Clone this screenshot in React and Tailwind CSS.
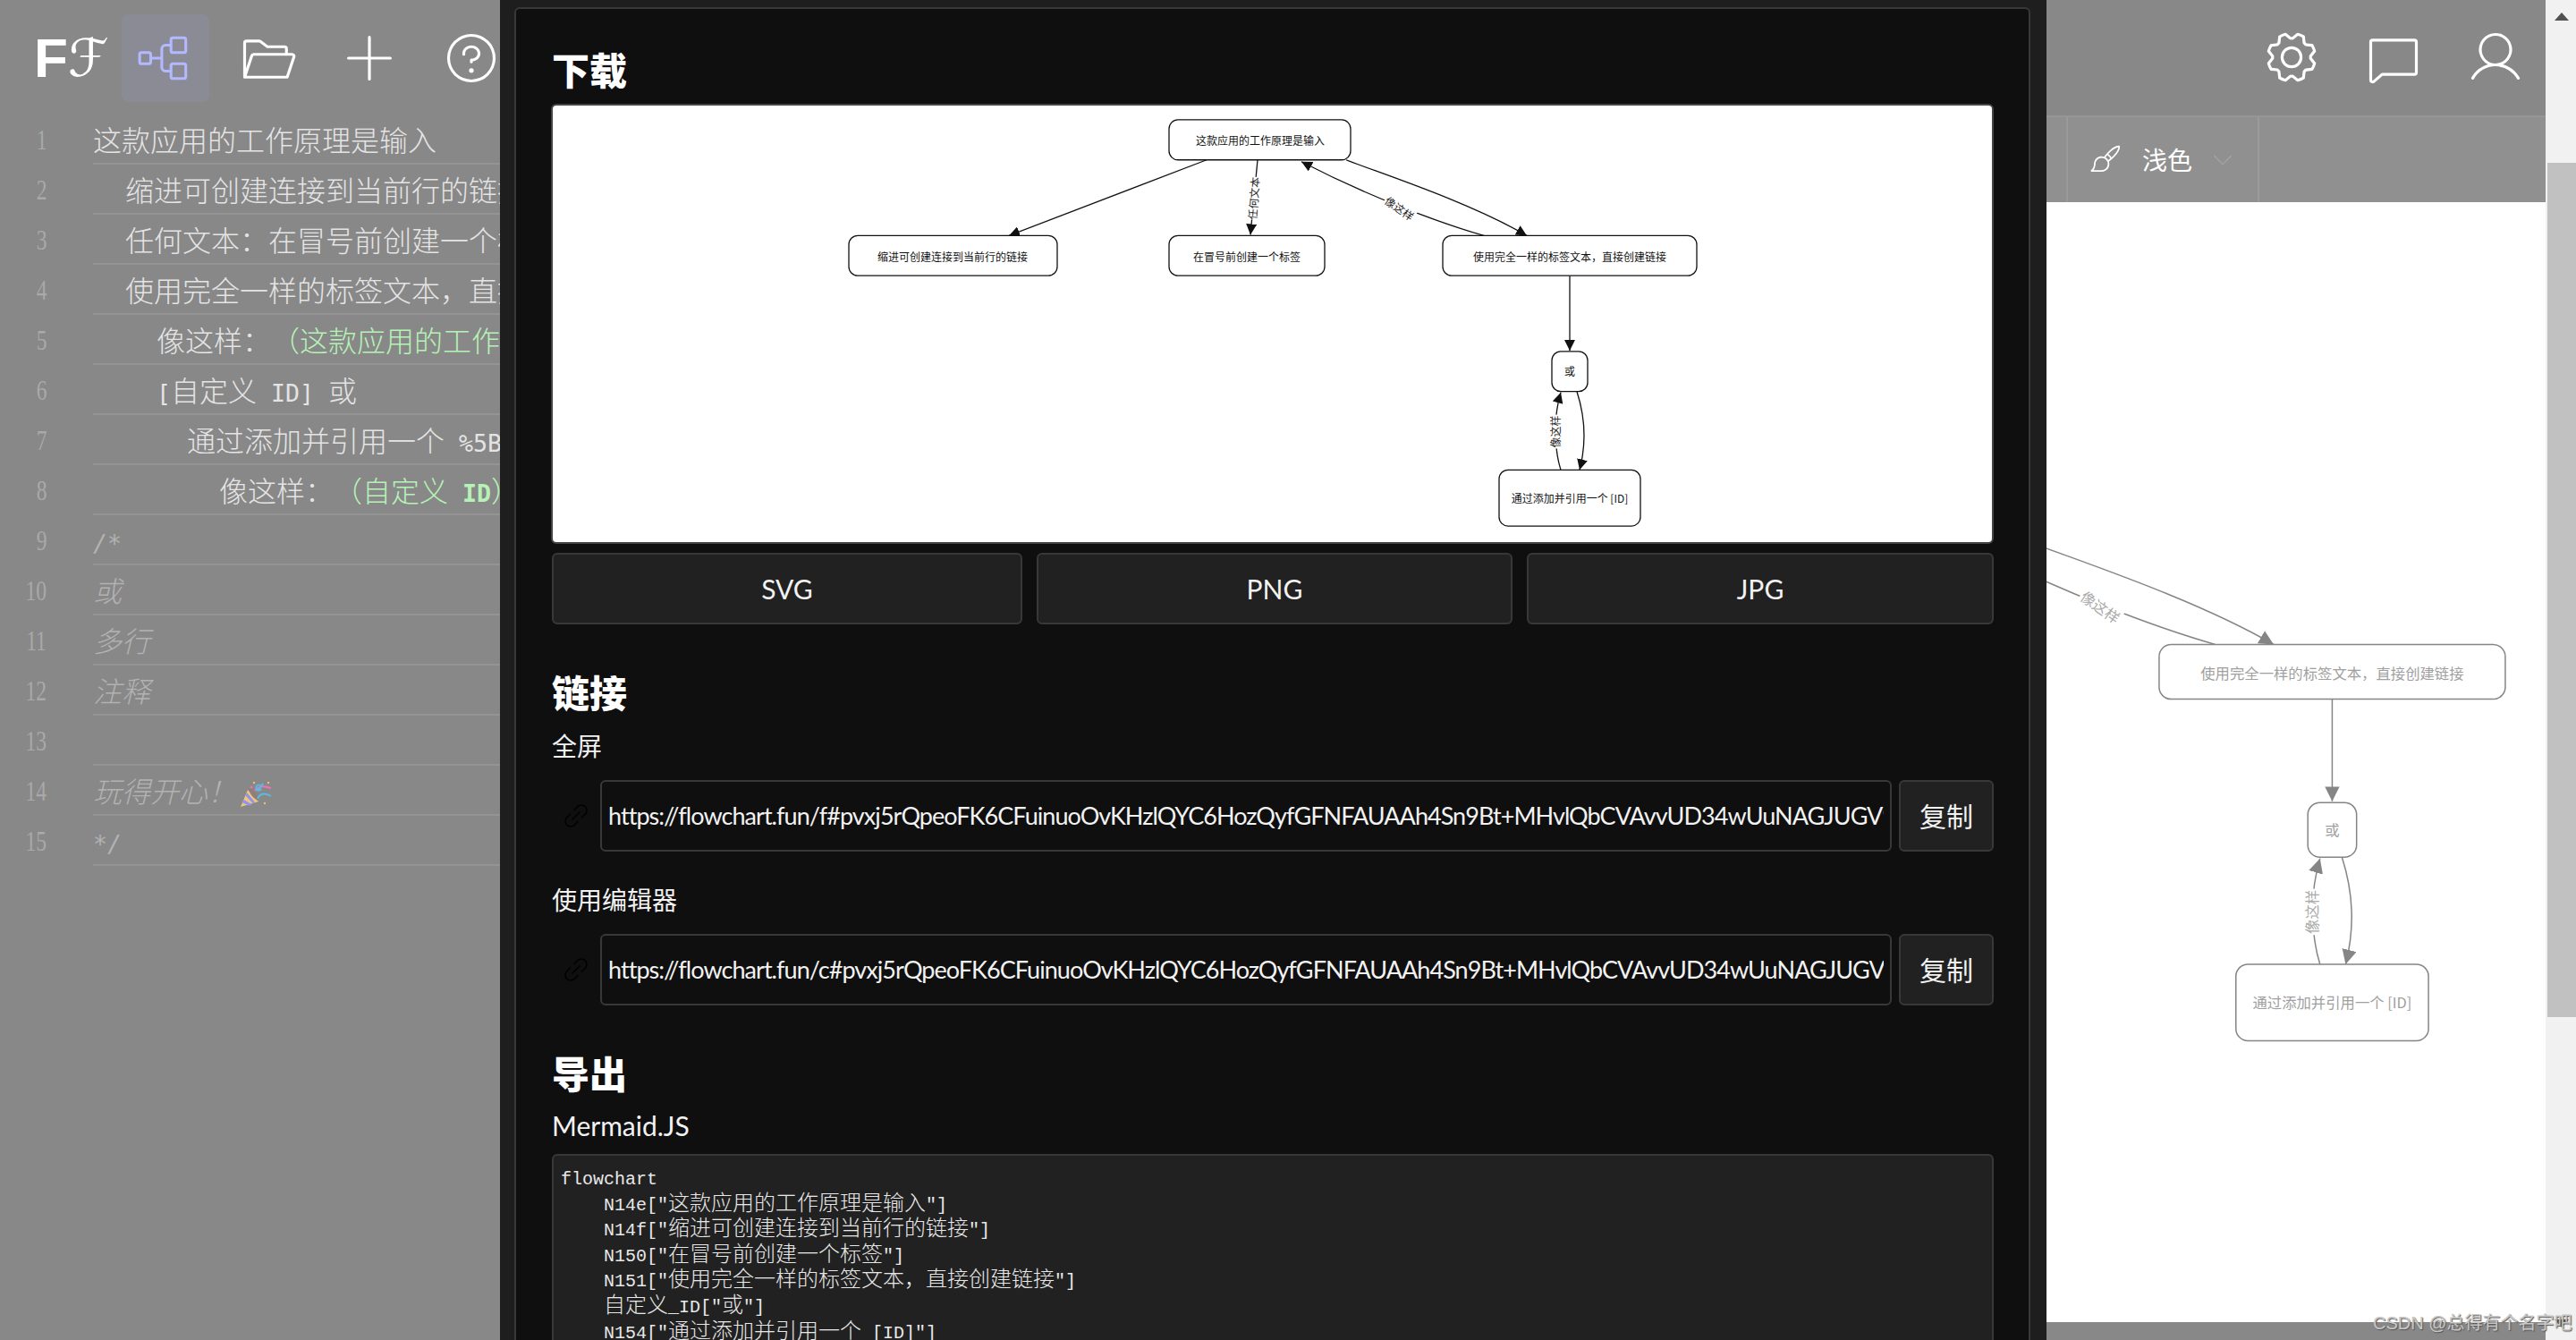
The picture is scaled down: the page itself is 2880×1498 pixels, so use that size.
import React from 'react';
import {
  PiTreeStructureLight,
  PiFolderOpenLight,
  PiPlusLight,
  PiQuestionLight,
  PiGearLight,
  PiChatLight,
  PiUserLight,
  PiPaintBrushLight,
  PiCaretDownLight,
  PiLinkSimpleLight,
} from 'react-icons/pi';

const hash = 'pvxj5rQpeoFK6CFuinuoOvKHzlQYC6HozQyfGFNFAUAAh4Sn9Bt+MHvlQbCVAvvUD34wUuNAGJUGV9wBpQkA';

const editorLines = [
  { pad: '', text: '这款应用的工作原理是输入' },
  { pad: 'pl-9', text: '缩进可创建连接到当前行的链接' },
  { pad: 'pl-9', text: '任何文本：在冒号前创建一个标签' },
  { pad: 'pl-9', text: '使用完全一样的标签文本，直接创建链接' },
  { pad: 'pl-[71px]', text: '像这样：', green: '（这款应用的工作原理是输入）' },
  { pad: 'pl-[71px]', text: '[自定义 ID] 或' },
  { pad: 'pl-[105px]', text: '通过添加并引用一个 %5BID%5D' },
  { pad: 'pl-[141px]', text: '像这样：', green: '（自定义 ID）' },
  { pad: '', text: '/*', comment: true },
  { pad: '', text: '或', comment: true },
  { pad: '', text: '多行', comment: true },
  { pad: '', text: '注释', comment: true },
  { pad: '', text: '', comment: true },
  { pad: '', text: '玩得开心！', comment: true, popper: true },
  { pad: '', text: '*/', comment: true },
];

const codeLines = [
  'flowchart',
  '    N14e["这款应用的工作原理是输入"]',
  '    N14f["缩进可创建连接到当前行的链接"]',
  '    N150["在冒号前创建一个标签"]',
  '    N151["使用完全一样的标签文本，直接创建链接"]',
  '    自定义_ID["或"]',
  '    N154["通过添加并引用一个 [ID]"]',
];

// ascii runs get a smaller mono size so they sit at half the width of a CJK glyph
const Mixed = ({ text, latin }) =>
  text.split(/([\x20-\x7e]+)/).map((part, i) =>
    /^[\x20-\x7e]+$/.test(part) ? (
      <span key={i} className={latin}>{part}</span>
    ) : (
      <span key={i}>{part}</span>
    )
  );

const Popper = () => (
  <svg width="36" height="32" viewBox="0 0 36 32" className="ml-1 inline-block align-middle">
    <path d="M1 30 L9 11 L21 24 Z" fill="#f3c47c" />
    <path d="M4.5 22 L14 27.2 L10.5 28.6 L3 25.5 Z" fill="#8f95ee" />
    <path d="M8 14 L17 24.8 L14.5 26 L6.5 17.5 Z" fill="#8f95ee" />
    <path d="M10 10 C14 8 20 14 21 23 C17 22 11 16 10 10 Z" fill="#8d7f79" />
    <path d="M17 12 C24 4 30 8 35 9" fill="none" stroke="#ee72b8" strokeWidth="2" />
    <path d="M20 21 C22 15 28 14 35 18" fill="none" stroke="#55bde8" strokeWidth="2" />
    <path d="M21 11 L26 4 M24 10 a3 3 0 1 1 -1 -4" fill="none" stroke="#55bde8" strokeWidth="2" />
    <circle cx="16" cy="3" r="1.2" fill="#e8c26e" />
    <circle cx="13" cy="8" r="1.4" fill="#ee72b8" />
    <circle cx="32" cy="3" r="1.2" fill="#e8c26e" />
    <circle cx="28" cy="26" r="1.2" fill="#e8c26e" />
  </svg>
);

const IconButton = ({ children, active }) => (
  <div className={`w-[98px] h-[98px] shrink-0 flex items-center justify-center rounded-lg ${active ? 'bg-[#8b8b96] text-[#b4b8ff]' : 'text-white'}`}>
    {children}
  </div>
);

const Flowchart = ({ id, width, height, stroke, text, labelColor, lineWidth }) => {
  const nodes = [
    { x: 1307, y: 134, w: 203, h: 45, cx: 1409, cy: 157, label: '这款应用的工作原理是输入' },
    { x: 949, y: 264, w: 233, h: 45, cx: 1065, cy: 287, label: '缩进可创建连接到当前行的链接' },
    { x: 1307, y: 264, w: 174, h: 45, cx: 1394, cy: 287, label: '在冒号前创建一个标签' },
    { x: 1613, y: 264, w: 284, h: 45, cx: 1755, cy: 287, label: '使用完全一样的标签文本，直接创建链接' },
    { x: 1735, y: 394, w: 40, h: 45, cx: 1755, cy: 416, label: '或' },
    { x: 1676, y: 527, w: 158, h: 63, cx: 1755, cy: 558, label: '通过添加并引用一个 [ID]' },
  ];
  const edges = [
    'M1349 179 L1128 264',
    'M1406 179 L1398 263',
    'M1659 264 C1610 250 1530 220 1455 181',
    'M1505 179 C1540 193 1640 225 1707 264',
    'M1755 309 L1755 393',
    'M1745 527 C1738 505 1736 470 1745 440',
    'M1763 439 C1773 470 1773 500 1766 527',
  ];
  const labels = [
    { x: 1401, y: 222, r: -86, w: 48, t: '任何文本' },
    { x: 1565, y: 233, r: 35, w: 38, t: '像这样' },
    { x: 1738, y: 484, r: -90, w: 38, t: '像这样' },
  ];
  return (
    <svg width={width} height={height} viewBox="618 118 1610 490" preserveAspectRatio="none" className="block">
      <defs>
        <marker id={id} markerUnits="userSpaceOnUse" markerWidth="13" markerHeight="12" refX="12" refY="6" orient="auto">
          <path d="M0 0 L12 6 L0 12 Z" fill={stroke} />
        </marker>
      </defs>
      {edges.map((d, i) => (
        <path key={i} d={d} fill="none" stroke={stroke} strokeWidth={lineWidth} markerEnd={`url(#${id})`} />
      ))}
      {labels.map((l, i) => (
        <g key={i} transform={`translate(${l.x} ${l.y}) rotate(${l.r})`}>
          <rect x={-l.w / 2} y={-8} width={l.w} height={16} fill="#ffffff" />
          <text textAnchor="middle" dominantBaseline="central" fontSize="12" fill={labelColor} className="font-['Noto_Sans_CJK_SC',sans-serif]">{l.t}</text>
        </g>
      ))}
      {nodes.map((n, i) => (
        <g key={i}>
          <rect x={n.x} y={n.y} width={n.w} height={n.h} rx="10" fill="#ffffff" stroke={stroke} strokeWidth={lineWidth} />
          <text x={n.cx} y={n.cy} textAnchor="middle" dominantBaseline="central" fontSize="12" fill={text} className="font-['Noto_Sans_CJK_SC',sans-serif]">{n.label}</text>
        </g>
      ))}
    </svg>
  );
};

const Heading = ({ className, children }) => (
  <h2 className={`text-[42px] leading-[50px] font-black text-white ${className}`}>{children}</h2>
);

const ExportButton = ({ className, children }) => (
  <button className={`h-20 rounded-md border-2 border-[#383838] bg-[#212121] text-[30px] text-[#f2f2f2] ${className}`}>{children}</button>
);

const LinkRow = ({ value }) => (
  <div className="flex h-20 items-stretch">
    <div className="w-[54px] flex items-center justify-center text-black">
      <PiLinkSimpleLight size={32} />
    </div>
    <input
      readOnly
      value={value}
      className="flex-1 min-w-0 rounded-md border-2 border-[#383838] bg-[#0f0f0f] px-[7px] text-[27px] tracking-[-0.95px] text-[#f2f2f2] outline-none"
    />
    <button className="ml-2 w-[106px] rounded-md border-2 border-[#383838] bg-[#212121] text-[30px] text-[#f2f2f2]">复制</button>
  </div>
);

export default function App() {
  return (
    <div className="relative flex w-[2880px] h-[1498px] overflow-hidden bg-[#888888] font-['Lato','Noto_Sans_CJK_SC',sans-serif]">
      {/* editor side */}
      <div className="w-[559px] shrink-0 overflow-hidden bg-[#888888]">
        <div className="flex h-32 items-center pt-[2px]">
          <div className="flex w-[136px] shrink-0 items-center pl-[38px] text-white">
            <span className="text-[62px] leading-none font-bold font-['Liberation_Sans',sans-serif]">F</span>
            <span className="text-[58px] leading-none font-['DejaVu_Sans',serif]">ℱ</span>
          </div>
          <div className="flex gap-4">
            <IconButton active><PiTreeStructureLight size={66} /></IconButton>
            <IconButton><PiFolderOpenLight size={68} /></IconButton>
            <IconButton><PiPlusLight size={68} /></IconButton>
            <IconButton><PiQuestionLight size={68} /></IconButton>
          </div>
        </div>
        <div>
          {editorLines.map((line, i) => (
            <div key={i} className="flex h-14 items-center whitespace-pre">
              <div className="w-[52px] shrink-0 text-right text-[#a9a9a9] text-[31px] leading-none font-['Liberation_Serif',serif]">
                <span className="inline-block origin-right scale-x-[0.76]">{i + 1}</span>
              </div>
              <div className={`ml-[52px] w-[600px] shrink-0 h-14 border-b-2 border-[#949494] text-[32px] leading-[54px] font-light [text-spacing-trim:space-all] font-['Noto_Sans_CJK_SC',sans-serif] ${line.pad} ${line.comment ? 'italic text-[#b2b2b2]' : 'text-[#e4e4e4]'}`}>
                <Mixed text={line.text} latin="text-[26.6px] font-normal font-['DejaVu_Sans_Mono',monospace]" />
                {line.green && (
                  <span className="text-[#b6f2b6]">
                    <Mixed text={line.green} latin="text-[26.6px] font-bold font-['DejaVu_Sans_Mono',monospace]" />
                  </span>
                )}
                {line.popper && <Popper />}
              </div>
            </div>
          ))}
        </div>
      </div>

      {/* hosted dialog */}
      <div className="w-[1729px] shrink-0 bg-[#1e1e1e] pl-4 pr-[18px] pt-2">
        <div className="h-full rounded-t-md border-x-2 border-t-2 border-[#383838] bg-[#0f0f0f] pl-10 pr-[39px] pt-[44px] overflow-hidden">
          <Heading>下载</Heading>
          <div className="mt-3 h-[492px] overflow-hidden rounded-md border-2 border-[#444444] bg-white -ml-px">
            <Flowchart id="arrow-dark" width={1610} height={488} stroke="#111111" text="#111111" labelColor="#222222" lineWidth={1.3} />
          </div>
          <div className="mt-[10px] flex gap-4">
            <ExportButton className="w-[526px]">SVG</ExportButton>
            <ExportButton className="w-[532px]">PNG</ExportButton>
            <ExportButton className="flex-1">JPG</ExportButton>
          </div>
          <Heading className="mt-[52px]">链接</Heading>
          <div className="mt-4 text-[28px] leading-9 text-[#f2f2f2]">全屏</div>
          <div className="mt-5"><LinkRow value={`https://flowchart.fun/f#${hash}`} /></div>
          <div className="mt-9 text-[28px] leading-9 text-[#f2f2f2]">使用编辑器</div>
          <div className="mt-5"><LinkRow value={`https://flowchart.fun/c#${hash}`} /></div>
          <Heading className="mt-[52px]">导出</Heading>
          <div className="mt-[14px] text-[30px] leading-9 text-[#f2f2f2]">Mermaid.JS</div>
          <div className="mt-[14px] h-[300px] rounded-md border-2 border-[#383838] bg-[#212121] px-2 pt-2 text-[24px] leading-[28.6px] font-light whitespace-pre text-[#e8e8e8] font-['Noto_Sans_CJK_SC',sans-serif]">
            {codeLines.map((code, i) => (
              <div key={i} className="h-[28.6px]">
                <Mixed text={code} latin="text-[20px] font-normal font-['Liberation_Mono',monospace]" />
              </div>
            ))}
          </div>
        </div>
      </div>

      {/* preview side */}
      <div className="w-[558px] shrink-0 flex flex-col bg-[#888888]">
        <div className="flex h-[131px] shrink-0 items-center justify-end gap-4 pr-[7px] border-b-2 border-[#959595] pb-[2px]">
          <IconButton><PiGearLight size={68} /></IconButton>
          <IconButton><PiChatLight size={68} /></IconButton>
          <IconButton><PiUserLight size={68} /></IconButton>
        </div>
        <div className="flex h-[95px] shrink-0 bg-[#909090] pl-[22px]">
          <div className="flex w-[216px] items-center border-x-2 border-[#9a9a9a] pl-6 pb-[2px] text-white">
            <PiPaintBrushLight size={38} />
            <span className="ml-[21px] text-[28px] font-['Noto_Sans_CJK_SC',sans-serif]">浅色</span>
            <PiCaretDownLight size={30} className="ml-[19px] text-[#a3a3a3]" />
          </div>
        </div>
        <div className="relative flex-1 overflow-hidden bg-white">
          <div className="absolute -left-[1230px] top-[296px]">
            <Flowchart id="arrow-light" width={2194} height={666} stroke="#858585" text="#a0a0a0" labelColor="#aaaaaa" lineWidth={1.1} />
          </div>
        </div>
        <div className="h-5 shrink-0 bg-[#888888]" />
      </div>

      {/* page scrollbar */}
      <div className="relative w-[34px] shrink-0 bg-[#f1f1f1]">
        <div className="absolute left-[10px] top-[14px] h-0 w-0 border-x-[8px] border-b-[9px] border-x-transparent border-b-[#505050]" />
        <div className="absolute left-[2px] right-0 top-[182px] h-[955px] bg-[#c1c1c1]" />
        <div className="absolute left-[10px] top-[1475px] h-0 w-0 border-x-[8px] border-t-[9px] border-x-transparent border-t-[#505050]" />
      </div>

      {/* watermark */}
      <div className="absolute left-[2653px] top-[1465px] text-[20px] leading-7 text-[#c8c8c8] whitespace-nowrap [text-shadow:1px_1px_1px_#555555] font-['Liberation_Sans','Noto_Sans_CJK_SC',sans-serif]">
        CSDN @总得有个名字吧
      </div>
    </div>
  );
}
